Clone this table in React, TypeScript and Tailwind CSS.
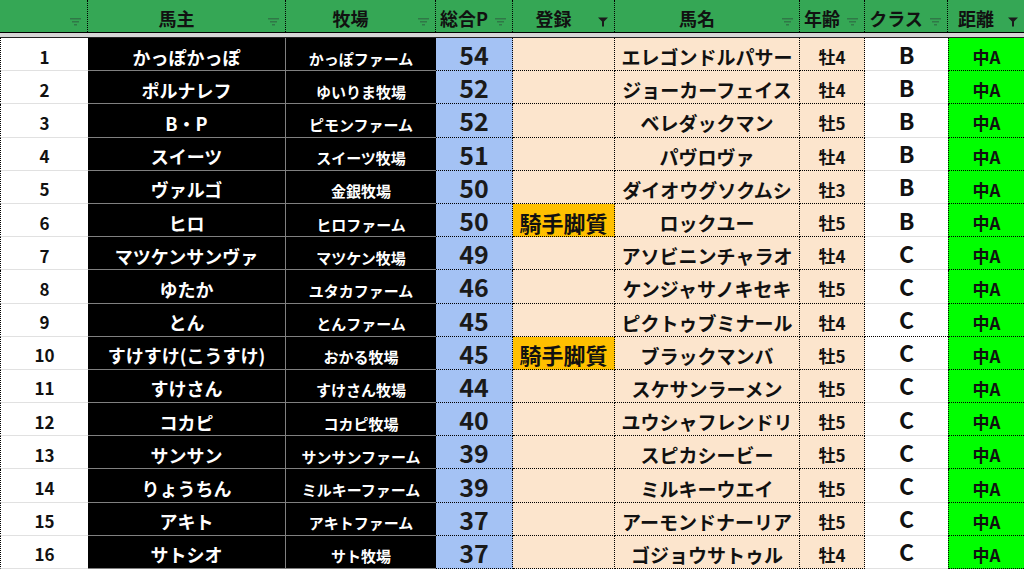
import React from "react";

type Row = {
  owner: string;
  farm: string;
  pt: number;
  reg?: string;
  horse: string;
  age: string;
  cls: string;
  dist: string;
};

const rows: Row[] = [
  { owner: "かっぽかっぽ", farm: "かっぽファーム", pt: 54, horse: "エレゴンドルパサー", age: "牡4", cls: "B", dist: "中A" },
  { owner: "ポルナレフ", farm: "ゆいりま牧場", pt: 52, horse: "ジョーカーフェイス", age: "牡4", cls: "B", dist: "中A" },
  { owner: "B・P", farm: "ピモンファーム", pt: 52, horse: "ベレダックマン", age: "牡5", cls: "B", dist: "中A" },
  { owner: "スイーツ", farm: "スイーツ牧場", pt: 51, horse: "パヴロヴァ", age: "牡4", cls: "B", dist: "中A" },
  { owner: "ヴァルゴ", farm: "金銀牧場", pt: 50, horse: "ダイオウグソクムシ", age: "牡3", cls: "B", dist: "中A" },
  { owner: "ヒロ", farm: "ヒロファーム", pt: 50, reg: "騎手脚質", horse: "ロックユー", age: "牡5", cls: "B", dist: "中A" },
  { owner: "マツケンサンヴァ", farm: "マツケン牧場", pt: 49, horse: "アソビニンチャラオ", age: "牡4", cls: "C", dist: "中A" },
  { owner: "ゆたか", farm: "ユタカファーム", pt: 46, horse: "ケンジャサノキセキ", age: "牡5", cls: "C", dist: "中A" },
  { owner: "とん", farm: "とんファーム", pt: 45, horse: "ピクトゥブミナール", age: "牡4", cls: "C", dist: "中A" },
  { owner: "すけすけ(こうすけ)", farm: "おかる牧場", pt: 45, reg: "騎手脚質", horse: "ブラックマンバ", age: "牡5", cls: "C", dist: "中A" },
  { owner: "すけさん", farm: "すけさん牧場", pt: 44, horse: "スケサンラーメン", age: "牡5", cls: "C", dist: "中A" },
  { owner: "コカピ", farm: "コカピ牧場", pt: 40, horse: "ユウシャフレンドリ", age: "牡5", cls: "C", dist: "中A" },
  { owner: "サンサン", farm: "サンサンファーム", pt: 39, horse: "スピカシービー", age: "牡5", cls: "C", dist: "中A" },
  { owner: "りょうちん", farm: "ミルキーファーム", pt: 39, horse: "ミルキーウエイ", age: "牡5", cls: "C", dist: "中A" },
  { owner: "アキト", farm: "アキトファーム", pt: 37, horse: "アーモンドナーリア", age: "牡5", cls: "C", dist: "中A" },
  { owner: "サトシオ", farm: "サト牧場", pt: 37, horse: "ゴジョウサトゥル", age: "牡4", cls: "C", dist: "中A" },
];

const cols = "grid grid-cols-[88px_198px_150px_77px_102px_185px_65px_83px_1fr]";

function FilterIcon({ active }: { active?: boolean }) {
  if (active) {
    return (
      <svg width="10" height="10" viewBox="0 0 10 10" className="absolute right-[6px] top-[17px]">
        <path d="M0 0.5H10L6 4.5V9.5H4V4.5Z" fill="#1b1b1b" />
      </svg>
    );
  }
  return (
    <svg width="11" height="9" viewBox="0 0 11 9" className="absolute right-[6px] top-[18px]">
      <rect x="0" y="0" width="11" height="1.5" fill="#2f6d43" opacity="0.8" />
      <rect x="2" y="3" width="7" height="1.5" fill="#2f6d43" opacity="0.8" />
      <rect x="4" y="6" width="3" height="1.5" fill="#2f6d43" opacity="0.8" />
    </svg>
  );
}

const headers: { label: string; active?: boolean }[] = [
  { label: "" },
  { label: "馬主" },
  { label: "牧場" },
  { label: "総合P" },
  { label: "登録", active: true },
  { label: "馬名" },
  { label: "年齢" },
  { label: "クラス" },
  { label: "距離", active: true },
];

const dotted = "border-b border-r border-dotted border-black";

export default function App() {
  return (
    <div className="w-[1024px] h-[569px] overflow-hidden bg-white font-['Noto_Sans_CJK_JP',sans-serif] font-bold text-[#111]">
      {/* Header */}
      <div className={`${cols} h-[32px] bg-[#35a755]`}>
        {headers.map((h, i) => (
          <div
            key={i}
            className={`relative flex items-center justify-center pr-[20px] pt-[4px] text-[18px] leading-none ${
              i < headers.length - 1 ? "border-r border-dotted border-black" : ""
            }`}
          >
            {h.label}
            <FilterIcon active={h.active} />
          </div>
        ))}
      </div>
      <div className="h-[6px] border-t border-b border-t-black border-b-[#222] bg-[#d6d6d6]" />

      {/* Rows */}
      {rows.map((r, i) => (
        <div key={i} className={`${cols} h-[33.2px]`}>
          <div className="flex items-center justify-center pt-[4px] bg-white text-[17px] leading-none border-b border-[#e1e1e1] border-l border-l-black [border-left-style:dotted]">
            {i + 1}
          </div>
          <div className="flex items-center justify-center pt-[5px] bg-black text-white text-[18px] leading-none whitespace-nowrap border-b border-r border-[#808080]">
            {r.owner}
          </div>
          <div className="flex items-center justify-center pt-[8px] bg-black text-white text-[15px] leading-none whitespace-nowrap border-b border-[#808080]">
            {r.farm}
          </div>
          <div className={`flex items-center justify-center pt-[1px] bg-[#a4c2f4] text-[25px] leading-none text-[#1a1a1a] ${dotted}`}>
            {r.pt}
          </div>
          <div className={`flex items-center justify-center pt-[3px] text-[22px] leading-none whitespace-nowrap ${r.reg ? "bg-[#ffc000]" : "bg-[#fce5cd]"} ${dotted}`}>
            {r.reg}
          </div>
          <div className={`flex items-center justify-center pt-[5px] bg-[#fce5cd] text-[19px] leading-none whitespace-nowrap ${dotted}`}>
            {r.horse}
          </div>
          <div className={`flex items-center justify-center pt-[5px] bg-[#fce5cd] text-[17px] leading-none ${dotted}`}>
            {r.age}
          </div>
          <div
            className={`flex items-center justify-center bg-white text-[23px] leading-none border-b ${
              i === 8 ? "border-dotted border-black" : "border-[#e1e1e1]"
            }`}
          >
            {r.cls}
          </div>
          <div className="flex items-center justify-center pt-[5px] bg-[#00ff00] text-[17px] leading-none border-b border-l border-dotted border-black">
            {r.dist}
          </div>
        </div>
      ))}
    </div>
  );
}
